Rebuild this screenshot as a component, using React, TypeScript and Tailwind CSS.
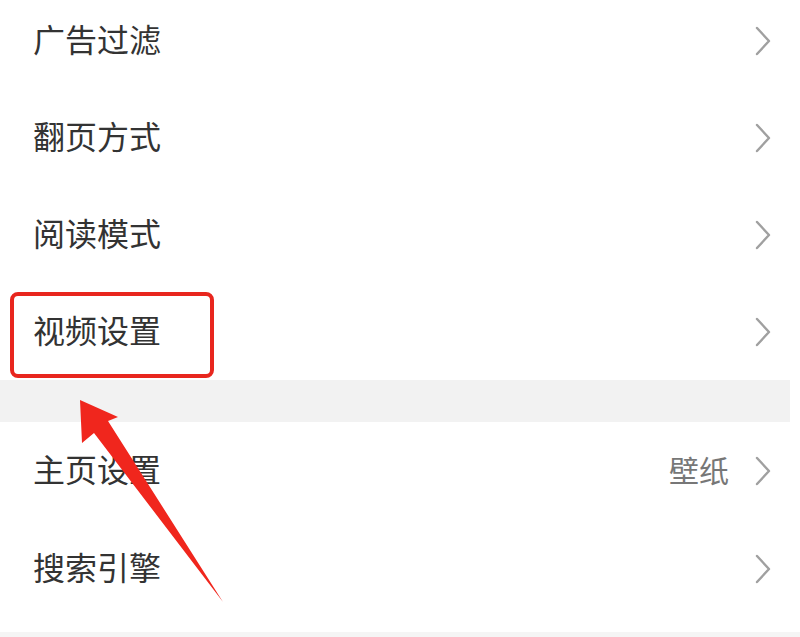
import React from "react";

const topRows = ["广告过滤", "翻页方式", "阅读模式", "视频设置"];
const bottomRows = [
  { title: "主页设置", value: "壁纸" },
  { title: "搜索引擎", value: "" },
];

const Chevron = () => (
  <svg width="18" height="30" viewBox="0 0 18 30" className="shrink-0">
    <polyline
      points="3,2 15,15 3,28"
      fill="none"
      stroke="#a0a0a0"
      strokeWidth="2.4"
      strokeLinecap="round"
      strokeLinejoin="round"
    />
  </svg>
);

const Row = ({ title, value }: { title: string; value?: string }) => (
  <div className="flex items-center justify-between pl-[33px] pr-[28px] pb-[5px] h-[97px]">
    <span className="text-[32px] leading-none text-[#333]">{title}</span>
    <div className="flex items-center gap-[25px] pt-[5px]">
      {value && <span className="text-[30px] leading-none text-[#777] -mt-[4px]">{value}</span>}
      <Chevron />
    </div>
  </div>
);

export default function App() {
  return (
    <div
      className="relative w-[800px] h-[637px] overflow-hidden bg-white"
      style={{ fontFamily: '"Noto Sans CJK SC", "Noto Sans", sans-serif' }}
    >
      <div className="-mt-[8px]">
        {topRows.map((t) => (
          <Row key={t} title={t} />
        ))}
      </div>
      <div className="h-[42px] bg-[#f2f2f2] mr-[10px]" />
      <div>
        {bottomRows.map((r) => (
          <div key={r.title} className="h-[98px]">
            <Row title={r.title} value={r.value} />
          </div>
        ))}
      </div>
      <div className="mt-[14px] h-[10px] bg-[#f5f5f5]" />

      {/* red highlight box */}
      <div className="absolute left-[10px] top-[292px] w-[204px] h-[86px] border-[4px] border-[#e8261e] rounded-[8px]" />

      {/* red arrow */}
      <svg className="absolute left-0 top-0" width="800" height="637" viewBox="0 0 800 637">
        <polygon points="80,400 118,417 108,421 223,602 94,433 82,443" fill="#f0261d" />
      </svg>
    </div>
  );
}
